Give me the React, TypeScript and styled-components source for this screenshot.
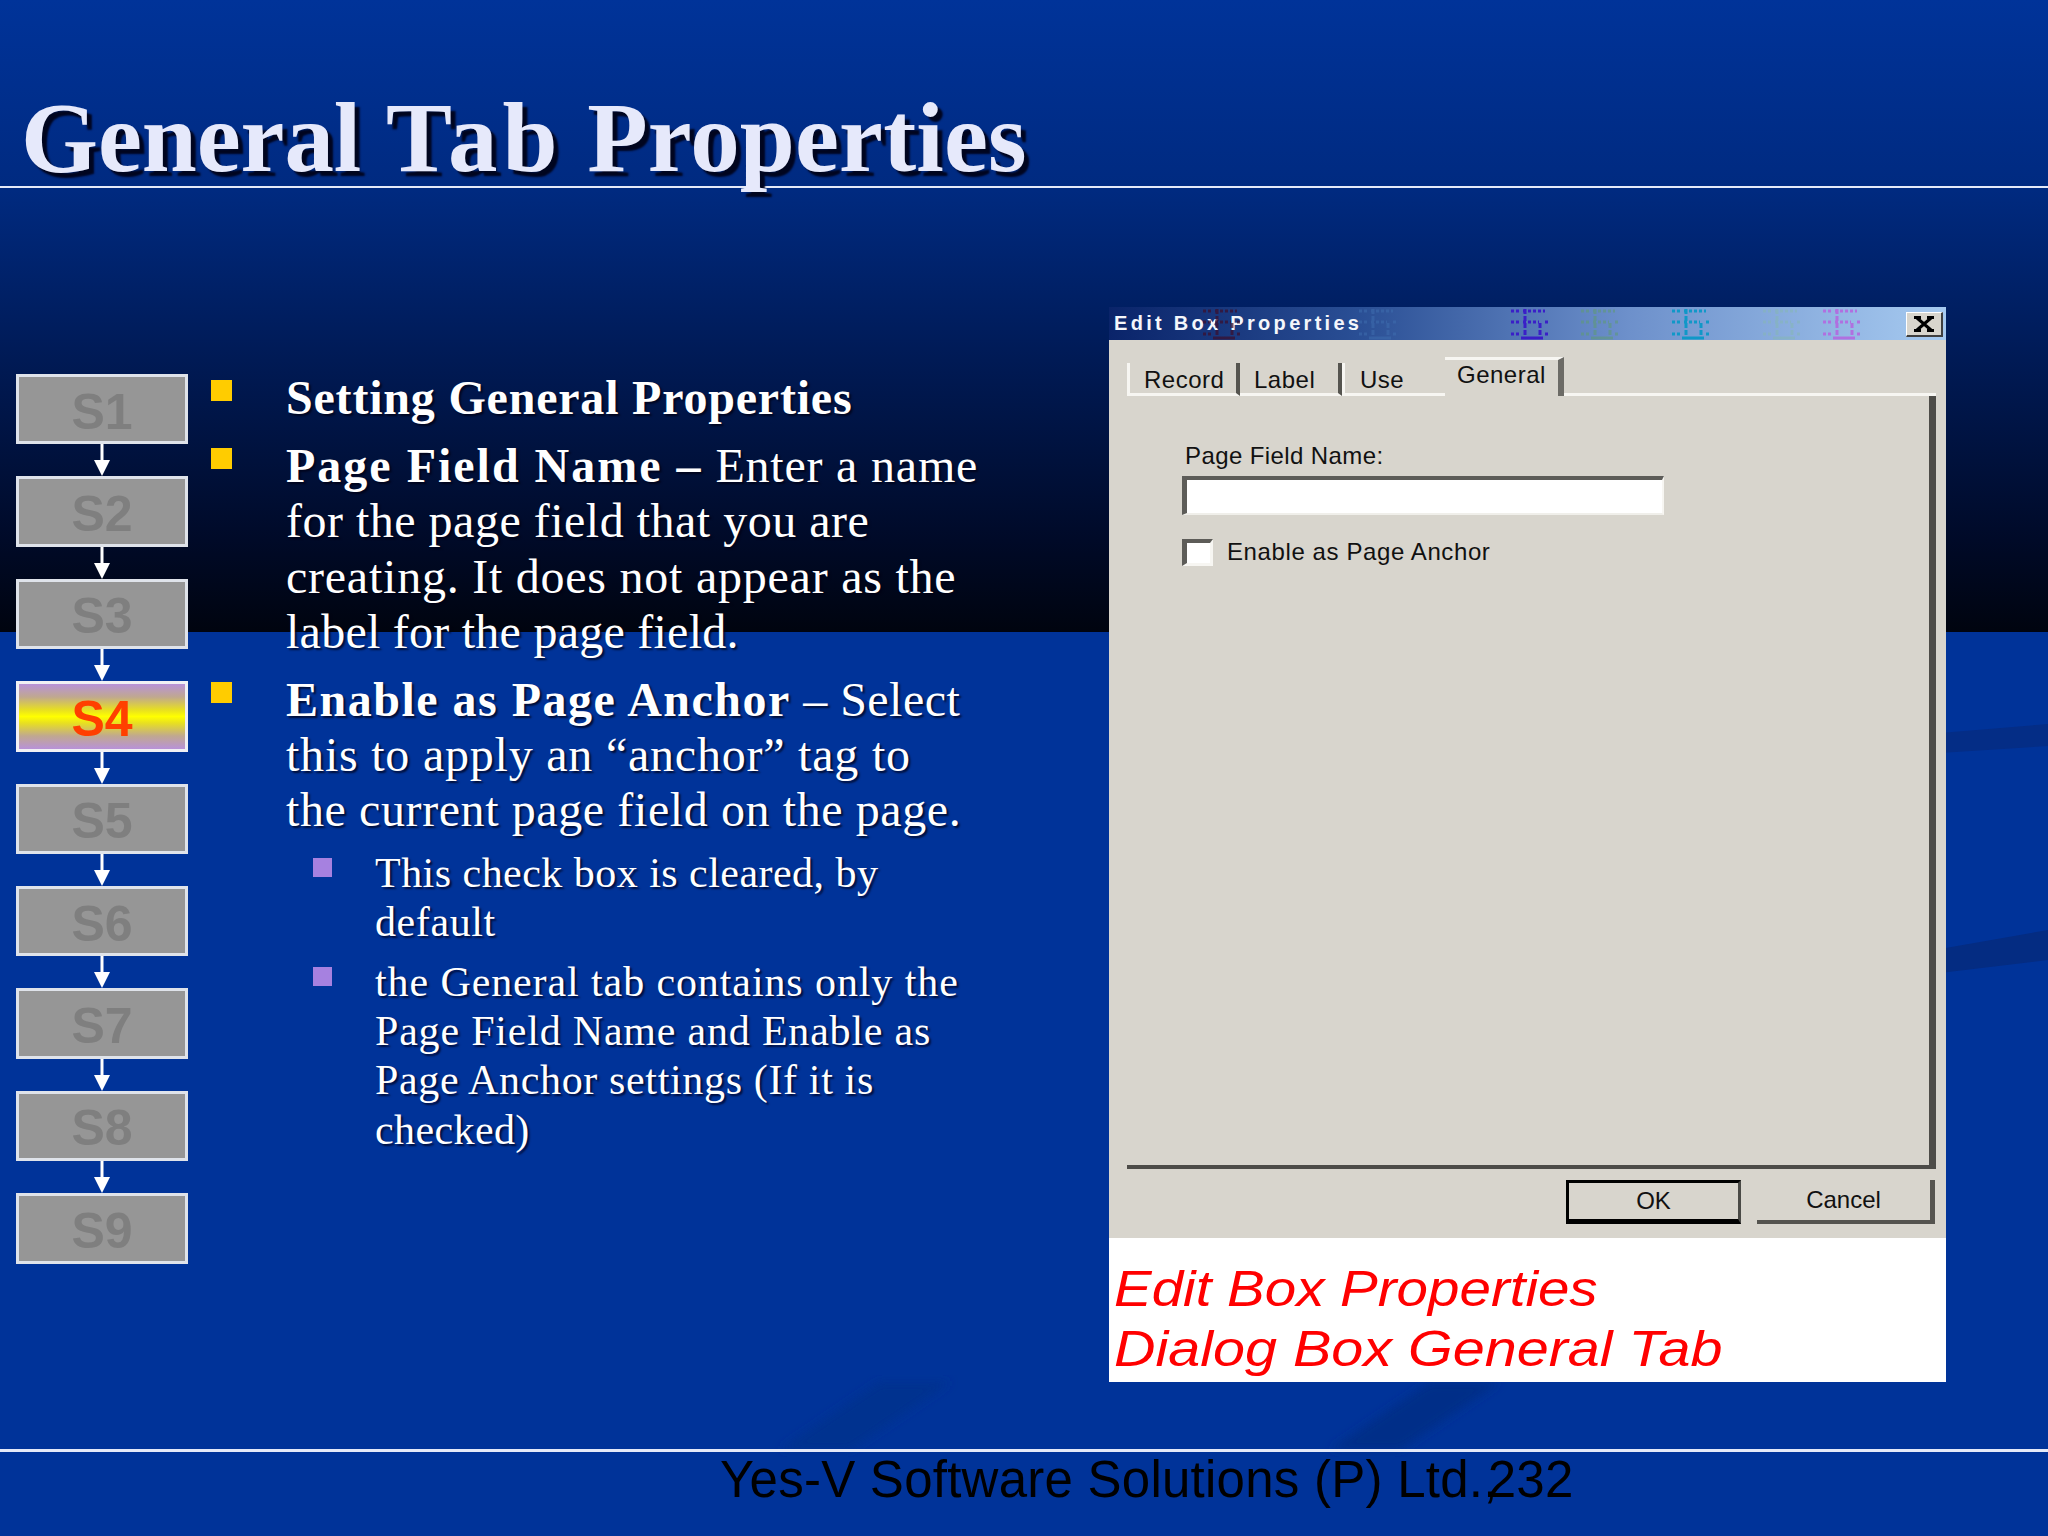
import * as React from 'react';
import styled, { createGlobalStyle } from 'styled-components';

const GlobalStyle = createGlobalStyle`
  html, body {
    margin: 0;
    padding: 0;
    background: #003399;
  }
`;

const Slide = styled.div`
  position: relative;
  width: 2048px;
  height: 1536px;
  overflow: hidden;
  display: flex;
  flex-direction: column;
  background: linear-gradient(
    to bottom,
    #003399 0,
    #002a80 190px,
    #001a55 360px,
    #000a28 540px,
    #00040f 632px,
    #003399 632px,
    #003399 100%
  );
`;

const Swooshes = styled.svg`
  position: absolute;
  inset: 0;
  width: 2048px;
  height: 1536px;
`;

const Header = styled.header`
  position: relative;
  height: 186px;
  padding: 0 0 0 21px;
  border-bottom: 2px solid #e4e9f8;
`;

const Title = styled.h1`
  margin: 0;
  padding-top: 83px;
  font: bold 99px/110px 'Liberation Serif', serif;
  color: #e6e9fb;
  text-shadow: 5px 5px 2px #00051f;
  white-space: nowrap;
`;

const TitleWord = styled.span<{ $ls: number }>`
  letter-spacing: ${p => p.$ls}px;
`;

const Main = styled.main`
  position: relative;
  flex: 1;
  display: grid;
  grid-template-columns: 172px 921px 837px;
  padding-left: 16px;
`;

const Steps = styled.nav`
  display: flex;
  flex-direction: column;
  align-items: center;
  padding-top: 186px;
`;

const Step = styled.div<{ $active?: boolean }>`
  box-sizing: border-box;
  width: 172px;
  height: 70.4px;
  border: 3px solid ${p => (p.$active ? '#f0f0f4' : '#dfe3ea')};
  display: flex;
  align-items: center;
  justify-content: center;
  padding-top: 5px;
  font: bold 50px/1 'Liberation Sans', sans-serif;
  color: ${p => (p.$active ? '#ff3f00' : '#7f7f7f')};
  background: ${p =>
    p.$active
      ? 'linear-gradient(to bottom, #b892d8 0, #c0a890 20%, #e8e020 40%, #ffff00 50%, #e8e020 60%, #c0a890 80%, #b892d8 100%)'
      : '#969696'};
`;

const ConnectorSvg = styled.svg`
  display: block;
  width: 16px;
  height: 32px;
`;

const Connector = () => (
  <ConnectorSvg viewBox="0 0 16 32">
    <rect x="6.5" y="0" width="3" height="18" fill="#fff" />
    <polygon points="0,16 16,16 8,32" fill="#fff" />
  </ConnectorSvg>
);

const Outline = styled.section`
  padding: 182px 0 0 23px;
`;

const Item = styled.div`
  display: grid;
  grid-template-columns: 75px 1fr;
  margin-bottom: 13px;
`;

const Bullet = styled.span`
  width: 21px;
  height: 21px;
  margin-top: 10px;
  background: #ffcc00;
`;

const ItemText = styled.div`
  font: 48px/55.2px 'Liberation Serif', serif;
  color: #fff;
  text-shadow: 2px 2px 2px rgba(0, 0, 20, 0.75);
  white-space: nowrap;
`;

// Garamond in the slide runs wider on some lines than Liberation Serif does
const Line = styled.div<{ $ls: number }>`
  letter-spacing: ${p => p.$ls}px;
`;

const Lead = styled.b<{ $ls: number }>`
  letter-spacing: ${p => p.$ls}px;
`;

const SubList = styled.div`
  margin: -2px 0 0 102px;
`;

const SubItem = styled.div`
  display: grid;
  grid-template-columns: 62px 1fr;
  margin-bottom: 11px;
`;

const SubBullet = styled.span`
  width: 19px;
  height: 19px;
  margin-top: 9px;
  background: #a681e0;
`;

const SubText = styled.div`
  font: 42px/49.2px 'Liberation Serif', serif;
  color: #fff;
  text-shadow: 2px 2px 2px rgba(0, 0, 30, 0.75);
  white-space: nowrap;
`;

const Dialog = styled.section`
  display: flex;
  flex-direction: column;
  width: 837px;
  height: 1075px;
  margin-top: 119px;
  background: #d8d5cd;
`;

const TitleBar = styled.div`
  position: relative;
  flex: none;
  box-sizing: border-box;
  height: 33px;
  padding: 6px 0 0 5px;
  background: linear-gradient(to right, #0a246a 0, #2a4f95 30%, #6d90cb 62%, #a6caf0 100%);
  font: bold 20px/20px 'Liberation Sans', sans-serif;
  letter-spacing: 3.3px;
  color: #f4f6fb;
  white-space: nowrap;
`;

const Glyph = styled.svg<{ $x: number; $color: string; $fade: number }>`
  position: absolute;
  top: 0;
  left: ${p => p.$x}px;
  width: 42px;
  height: 33px;
  color: ${p => p.$color};
  opacity: ${p => p.$fade};
`;

const TitleGlyph = ({ x, color, fade = 1 }: { x: number; color: string; fade?: number }) => (
  <Glyph $x={x} $color={color} $fade={fade} viewBox="0 0 42 33" fill="none" stroke="currentColor">
    <path d="M2 4 H10 M14 4 H36 M2 15 H10 M14 15 H30 M2 27 H10 M36 27 H40 M36 15 H40" strokeWidth="3" strokeDasharray="3 2" />
    <path d="M12 31 H34" strokeWidth="3" />
    <path d="M16 2 V31 M31 16 V31" strokeWidth="3" strokeDasharray="5 2" />
  </Glyph>
);

const CloseButton = styled.div`
  position: absolute;
  top: 5px;
  right: 3px;
  box-sizing: border-box;
  width: 37px;
  height: 25px;
  display: flex;
  align-items: center;
  justify-content: center;
  background: #d8d5cd;
  border-top: 1px solid #fff;
  border-left: 1px solid #fff;
  border-right: 2px solid #3f3f3f;
  border-bottom: 2px solid #3f3f3f;
`;

const Client = styled.div`
  flex: 1;
  display: flex;
  flex-direction: column;
  padding: 17px 10px 0 18px;
`;

const TabRow = styled.div`
  display: flex;
  align-items: flex-end;
  height: 39px;
`;

const Tab = styled.div<{ $w: number; $pad: number; $bright?: boolean; $last?: boolean }>`
  box-sizing: border-box;
  width: ${p => p.$w}px;
  height: 33px;
  padding: 4px 0 0 ${p => p.$pad}px;
  border-bottom: 3px solid #f7f6f2;
  border-left: ${p => (p.$bright ? '3px solid #f7f6f2' : '0')};
  border-right: ${p => (p.$last ? '0' : '4px solid #55544f')};
  font: 24px/26px 'Liberation Sans', sans-serif;
  letter-spacing: 0.5px;
  color: #111;
  white-space: nowrap;
`;

const SelectedTab = styled.div`
  box-sizing: border-box;
  width: 119px;
  height: 39px;
  padding: 2px 0 0 12px;
  border-top: 3px solid #f7f6f2;
  border-right: 6px solid #6c6b66;
  font: 24px/26px 'Liberation Sans', sans-serif;
  letter-spacing: 0.5px;
  color: #111;
`;

const TabFill = styled.div`
  flex: 1;
  height: 36px;
  border-bottom: 3px solid #f7f6f2;
`;

const TabPage = styled.div`
  box-sizing: border-box;
  height: 773px;
  width: 809px;
  padding: 45px 0 0 55px;
  border-right: 7px solid #4d4c48;
  border-bottom: 4px solid #4d4c48;
`;

const FieldLabel = styled.label`
  display: block;
  padding-left: 3px;
  font: 24px/30px 'Liberation Sans', sans-serif;
  letter-spacing: 0.4px;
  color: #111;
`;

const TextField = styled.div`
  box-sizing: border-box;
  width: 482px;
  height: 39px;
  margin-top: 5px;
  background: #fff;
  border-top: 4px solid #5d5c58;
  border-left: 5px solid #5d5c58;
  border-right: 2px solid #f7f6f2;
  border-bottom: 2px solid #f0efea;
`;

const CheckRow = styled.label`
  display: flex;
  align-items: center;
  gap: 14px;
  margin-top: 23px;
  font: 24px/28px 'Liberation Sans', sans-serif;
  letter-spacing: 0.6px;
  color: #111;
`;

const CheckBox = styled.span`
  box-sizing: border-box;
  width: 31px;
  height: 27px;
  background: #fff;
  border-top: 4px solid #5d5c58;
  border-left: 5px solid #5d5c58;
  border-right: 3px solid #f7f6f2;
  border-bottom: 3px solid #f7f6f2;
`;

const Buttons = styled.div`
  display: flex;
  justify-content: flex-end;
  gap: 16px;
  margin-top: 11px;
  padding-right: 1px;
`;

const Button = styled.div<{ $default?: boolean }>`
  box-sizing: border-box;
  height: 44px;
  width: ${p => (p.$default ? 175 : 178)}px;
  display: flex;
  align-items: center;
  justify-content: center;
  font: 24px/1 'Liberation Sans', sans-serif;
  color: #111;
  border-right: ${p => (p.$default ? '3px solid #4a4a46' : '5px solid #55544f')};
  border-bottom: ${p => (p.$default ? '5px solid #000' : '4px solid #55544f')};
  border-top: ${p => (p.$default ? '3px solid #000' : '0')};
  border-left: ${p => (p.$default ? '3px solid #000' : '0')};
`;

const Caption = styled.div`
  flex: none;
  box-sizing: border-box;
  height: 144px;
  padding: 21px 0 0 5px;
  background: #fff;
  font: italic 50px/60px 'Liberation Sans', sans-serif;
  color: #ff0000;
`;

const CaptionLine = styled.div<{ $stretch: number }>`
  transform: scaleX(${p => p.$stretch});
  transform-origin: left center;
  white-space: nowrap;
`;

const Footer = styled.footer`
  position: relative;
  flex: none;
  box-sizing: border-box;
  height: 87px;
  border-top: 3px solid #e4e9f8;
  padding: 0 0 0 720px;
  font: 51px/56px 'Liberation Sans', sans-serif;
  letter-spacing: 0.25px;
  color: #000;
  white-space: nowrap;
`;

const SlideNumber = styled.span`
  margin-left: -10px;
`;

const steps = ['S1', 'S2', 'S3', 'S4', 'S5', 'S6', 'S7', 'S8', 'S9'];

export default function App() {
  return (
    <>
      <GlobalStyle />
      <Slide>
        <Swooshes viewBox="0 0 2048 1536">
          <defs>
            <filter id="soft">
              <feGaussianBlur stdDeviation="5" />
            </filter>
          </defs>
          <polygon points="1940,733 2048,724 2048,746 1940,753" fill="#042d86" />
          <polygon points="1940,949 2048,930 2048,960 1940,973" fill="#042c82" />
          <polygon points="1330,1450 1430,1382 1500,1382 1400,1450" fill="#032d88" filter="url(#soft)" />
          <polygon points="780,1450 880,1382 950,1382 850,1450" fill="#02318f" filter="url(#soft)" />
        </Swooshes>
        <Header>
          <Title>
            <TitleWord $ls={-0.1}>General</TitleWord> <TitleWord $ls={5}>Tab</TitleWord>{' '}
            <TitleWord $ls={0.15}>Properties</TitleWord>
          </Title>
        </Header>
        <Main>
          <Steps>
            {steps.map((s, i) => (
              <React.Fragment key={s}>
                <Step $active={s === 'S4'}>{s}</Step>
                {i < steps.length - 1 && <Connector />}
              </React.Fragment>
            ))}
          </Steps>
          <Outline>
            <Item>
              <Bullet />
              <ItemText>
                <Lead $ls={0.8}>Setting General Properties</Lead>
              </ItemText>
            </Item>
            <Item>
              <Bullet />
              <ItemText>
                <Line $ls={0.8}>
                  <Lead $ls={2}>Page Field Name –</Lead> Enter a name
                </Line>
                <Line $ls={0.5}>for the page field that you are</Line>
                <Line $ls={0.76}>creating. It does not appear as the</Line>
                <Line $ls={0.25}>label for the page field.</Line>
              </ItemText>
            </Item>
            <Item>
              <Bullet />
              <ItemText>
                <Line $ls={0.45}>
                  <Lead $ls={1.5}>Enable as Page Anchor</Lead> – Select
                </Line>
                <Line $ls={0.78}>this to apply an “anchor” tag to</Line>
                <Line $ls={0.6}>the current page field on the page.</Line>
              </ItemText>
            </Item>
            <SubList>
              <SubItem>
                <SubBullet />
                <SubText>
                  <Line $ls={0.47}>This check box is cleared, by</Line>
                  <Line $ls={0.6}>default</Line>
                </SubText>
              </SubItem>
              <SubItem>
                <SubBullet />
                <SubText>
                  <Line $ls={0.9}>the General tab contains only the</Line>
                  <Line $ls={0.8}>Page Field Name and Enable as</Line>
                  <Line $ls={0.65}>Page Anchor settings (If it is</Line>
                  <Line $ls={0.4}>checked)</Line>
                </SubText>
              </SubItem>
            </SubList>
          </Outline>
          <Dialog>
            <TitleBar>
              Edit Box Properties
              <TitleGlyph x={92} color="#3a1030" fade={0.75} />
              <TitleGlyph x={248} color="#3f6fb0" fade={0.5} />
              <TitleGlyph x={400} color="#3a1fc8" />
              <TitleGlyph x={470} color="#5f9a78" fade={0.6} />
              <TitleGlyph x={561} color="#1098c8" />
              <TitleGlyph x={652} color="#86b8b0" fade={0.5} />
              <TitleGlyph x={712} color="#b070e0" />
              <CloseButton>
                <svg width="22" height="16" viewBox="0 0 22 16">
                  <path d="M4 2 L18 14 M18 2 L4 14 M1 1.5 H8 M14 1.5 H21 M1 14.5 H8 M14 14.5 H21" stroke="#000" strokeWidth="3" fill="none" />
                </svg>
              </CloseButton>
            </TitleBar>
            <Client>
              <TabRow>
                <Tab $w={113} $pad={14} $bright>Record</Tab>
                <Tab $w={102} $pad={14}>Label</Tab>
                <Tab $w={103} $pad={15} $bright $last>Use</Tab>
                <SelectedTab>General</SelectedTab>
                <TabFill />
              </TabRow>
              <TabPage>
                <FieldLabel>Page Field Name:</FieldLabel>
                <TextField />
                <CheckRow>
                  <CheckBox />
                  Enable as Page Anchor
                </CheckRow>
              </TabPage>
              <Buttons>
                <Button $default>OK</Button>
                <Button>Cancel</Button>
              </Buttons>
            </Client>
            <Caption>
              <CaptionLine $stretch={1.13}>Edit Box Properties</CaptionLine>
              <CaptionLine $stretch={1.15}>Dialog Box General Tab</CaptionLine>
            </Caption>
          </Dialog>
        </Main>
        <Footer>
          Yes-V Software Solutions (P) Ltd.,<SlideNumber>232</SlideNumber>
        </Footer>
      </Slide>
    </>
  );
}
